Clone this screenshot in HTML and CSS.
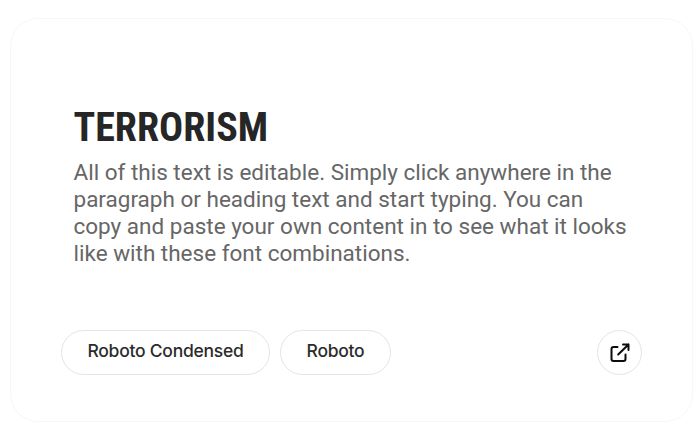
FILE: index.html
```html
<!DOCTYPE html>
<html lang="en">
<head>
<meta charset="utf-8">
<title>Font combination</title>
<link rel="stylesheet" href="styles.css">
</head>
<body>
<article class="card">
  <div class="copy">
    <h1 class="title">TERRORISM</h1>
    <p class="text">All of this text is editable. Simply click anywhere in the<br>paragraph or heading text and start typing. You can<br>copy and paste your own content in to see what it looks<br>like with these font combinations.</p>
  </div>
  <footer class="footer">
    <span class="pill pill-heading"><span>Roboto Condensed</span></span>
    <span class="pill pill-body"><span>Roboto</span></span>
    <a class="open" href="#" aria-label="Open">
      <svg class="icon" viewBox="0 0 22 22"><path d="M8.500 5H4.500a2 2 0 0 0-2 2V17a2 2 0 0 0 2 2H14.500a2 2 0 0 0 2-2v-4.500M9.200 12.500 19.500 2.500M14 2.500H19.500V8"/></svg>
    </a>
  </footer>
</article>
</body>
</html>
```

FILE: styles.css
```css
* { box-sizing: border-box; }
body { margin: 0; padding: 18px 5px 0 10px; background: #fff; }
.card { height: 404px; border: 1px solid #f7f7fa; border-radius: 28px; padding: 87px 50px 0; display: flex; flex-direction: column; }
.copy { height: 224px; padding-left: 12.5px; }
.title { margin: 0; font: 700 40px/44px "Roboto Condensed", Roboto, sans-serif; color: #262626; white-space: nowrap; }
.text { margin: 9px 0 0; font: 400 22.5px/27px Roboto, sans-serif; color: #666; white-space: nowrap; }
.footer { display: flex; gap: 10px; }
.pill { height: 45px; border: 1px solid #e4e4eb; border-radius: 23px; display: flex; align-items: center; justify-content: center; font: 500 17.5px/24px Inter, sans-serif; letter-spacing: -.25px; color: #2b2b2b; padding-bottom: 3px; white-space: nowrap; }
.pill-heading { width: 209px; }
.pill-body { width: 111px; }
.open { width: 45px; height: 45px; margin-left: auto; border: 1px solid #e4e4eb; border-radius: 50%; display: flex; align-items: center; justify-content: center; }
.icon { width: 22px; height: 22px; fill: none; stroke: #0c0c0c; stroke-width: 2; stroke-linecap: round; stroke-linejoin: round; }
```
